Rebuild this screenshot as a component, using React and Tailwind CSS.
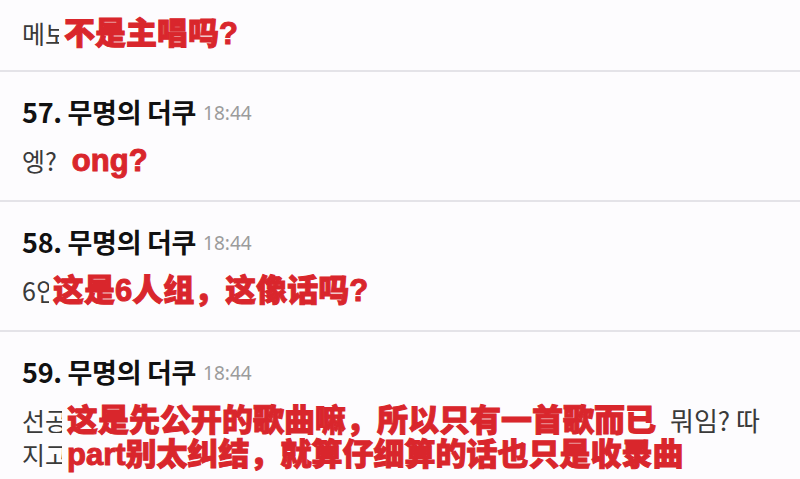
import React from 'react';

const ko = { fontFamily: '"Noto Sans CJK KR", "Noto Sans", sans-serif' };
const sub = { fontFamily: '"Liberation Sans", "Noto Sans CJK SC", sans-serif' };

// burnt-in subtitle text
function Sub({ children, className = '' }) {
  return (
    <span
      style={sub}
      className={`whitespace-nowrap text-[31px] font-black leading-none text-[#d9262c] [-webkit-text-stroke:1px_#d9262c] [text-shadow:0_0_2px_#fff,0_0_1px_#fff] ${className}`}
    >
      {children}
    </span>
  );
}

// korean text that runs under the subtitle and gets cut off
function Cut({ w, gap, children }) {
  return (
    <span style={ko} className={`${w} ${gap} inline-block shrink-0 overflow-hidden whitespace-nowrap text-[25px] leading-none text-[#3a3a3a]`}>
      {children}
    </span>
  );
}

function Header({ no }) {
  return (
    <div className="flex h-[32px] items-center gap-[7px]">
      <span style={ko} className="text-[27px] font-bold leading-none tracking-[-0.3px] text-[#111]">
        {no}. 무명의 더쿠
      </span>
      <span style={{ fontFamily: '"Noto Sans", sans-serif' }} className="mt-[4px] text-[19px] leading-none text-[#9b9b9b]">
        18:44
      </span>
    </div>
  );
}

function Row({ children, className = '' }) {
  return <div className={`flex h-[34px] items-center ${className}`}>{children}</div>;
}

export default function App() {
  return (
    <div className="min-h-screen w-full overflow-hidden bg-[#fdfcfe]">
      <section className="border-b-2 border-[#e4e3e8] px-[22px] pt-[16px] pb-[20px]">
        <Row>
          <Cut w="w-[37px]" gap="mr-[5px]">메보 아님?</Cut>
          <Sub>不是主唱吗?</Sub>
        </Row>
      </section>

      <section className="border-b-2 border-[#e4e3e8] px-[22px] pt-[23px] pb-[23px]">
        <Header no={57} />
        <Row className="mt-[16px]">
          <span style={ko} className="text-[25px] leading-none text-[#3a3a3a]">엥?</span>
          <Sub className="ml-[15px]">ong?</Sub>
        </Row>
      </section>

      <section className="border-b-2 border-[#e4e3e8] px-[22px] pt-[23px] pb-[23px]">
        <Header no={58} />
        <Row className="mt-[16px]">
          <Cut w="w-[27px]" gap="mr-[4px]">6인조인데 이게 말이 됨?</Cut>
          <Sub>这是6人组，这像话吗?</Sub>
        </Row>
      </section>

      <section className="px-[22px] pt-[23px] pb-[20px]">
        <Header no={59} />
        <Row className="mt-[16px]">
          <Cut w="w-[40px]" gap="mr-[5px]">선공개곡이라 한 곡밖에 없는데</Cut>
          <Sub>这是先公开的歌曲嘛，所以只有一首歌而已</Sub>
          <span style={ko} className="ml-[14px] whitespace-nowrap text-[26px] leading-none text-[#3a3a3a]">뭐임? 따</span>
        </Row>
        <Row>
          <Cut w="w-[40px]" gap="mr-[5px]">지고 보면 파트도 수록곡이잖아</Cut>
          <Sub>part别太纠结，就算仔细算的话也只是收录曲</Sub>
        </Row>
      </section>
    </div>
  );
}
